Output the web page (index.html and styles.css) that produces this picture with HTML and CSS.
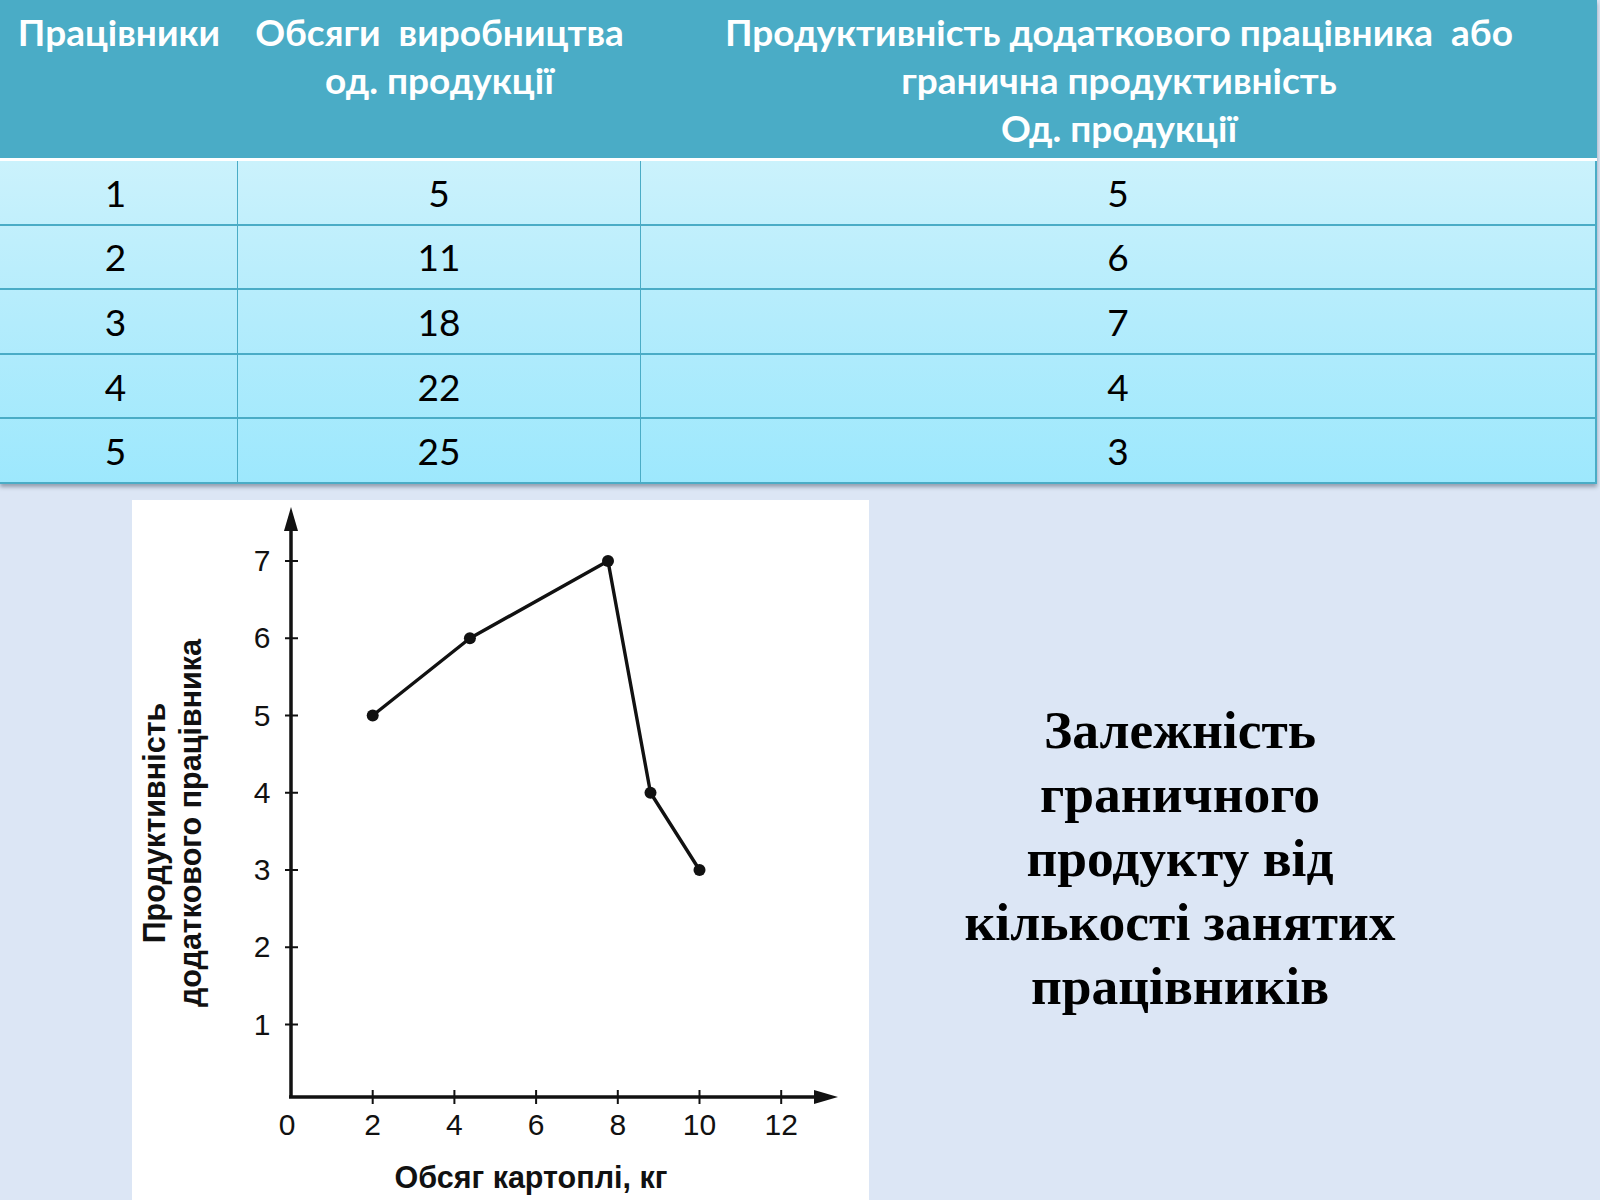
FILE: index.html
```html
<!DOCTYPE html>
<html lang="uk">
<head>
<meta charset="utf-8">
<title>Гранична продуктивність</title>
<link rel="stylesheet" href="styles.css">
</head>
<body>
<div class="slide">
  <div class="table">
    <div class="thead">
      <div class="th c1">Працівники</div>
      <div class="th c2">Обсяги&nbsp; виробництва<br>од. продукції</div>
      <div class="th c3">Продуктивність додаткового працівника&nbsp; або<br>гранична продуктивність<br>Од. продукції</div>
    </div>
    <div class="tbody">
      <div class="tr"><div class="td c1">1</div><div class="td c2">5</div><div class="td c3">5</div></div>
      <div class="tr"><div class="td c1">2</div><div class="td c2">11</div><div class="td c3">6</div></div>
      <div class="tr"><div class="td c1">3</div><div class="td c2">18</div><div class="td c3">7</div></div>
      <div class="tr"><div class="td c1">4</div><div class="td c2">22</div><div class="td c3">4</div></div>
      <div class="tr"><div class="td c1">5</div><div class="td c2">25</div><div class="td c3">3</div></div>
    </div>
  </div>

  <div class="lower">
    <div class="chart">
      <svg width="737" height="700" viewBox="0 0 737 700" xmlns="http://www.w3.org/2000/svg">
        <g stroke="#111" stroke-width="3.5" fill="none">
          <line x1="159" y1="22" x2="159" y2="598"/>
          <line x1="157" y1="597" x2="690" y2="597"/>
        </g>
        <polygon points="159,7 152,31 166,31" fill="#111"/>
        <polygon points="706,597 682,590 682,604" fill="#111"/>
        <g stroke="#111" stroke-width="2">
          <line x1="153" y1="61" x2="166" y2="61"/>
          <line x1="153" y1="138.25" x2="166" y2="138.25"/>
          <line x1="153" y1="215.5" x2="166" y2="215.5"/>
          <line x1="153" y1="292.75" x2="166" y2="292.75"/>
          <line x1="153" y1="370" x2="166" y2="370"/>
          <line x1="153" y1="447.25" x2="166" y2="447.25"/>
          <line x1="153" y1="524.5" x2="166" y2="524.5"/>
          <line x1="240.7" y1="590" x2="240.7" y2="604"/>
          <line x1="322.4" y1="590" x2="322.4" y2="604"/>
          <line x1="404.1" y1="590" x2="404.1" y2="604"/>
          <line x1="485.8" y1="590" x2="485.8" y2="604"/>
          <line x1="567.5" y1="590" x2="567.5" y2="604"/>
          <line x1="649.2" y1="590" x2="649.2" y2="604"/>
        </g>
        <g class="tick" text-anchor="middle">
          <text x="130" y="71">7</text>
          <text x="130" y="148">6</text>
          <text x="130" y="226">5</text>
          <text x="130" y="303">4</text>
          <text x="130" y="380">3</text>
          <text x="130" y="457">2</text>
          <text x="130" y="535">1</text>
          <text x="155" y="635">0</text>
          <text x="240.7" y="635">2</text>
          <text x="322.4" y="635">4</text>
          <text x="404.1" y="635">6</text>
          <text x="485.8" y="635">8</text>
          <text x="567.5" y="635">10</text>
          <text x="649.2" y="635">12</text>
        </g>
        <polyline points="240.7,215.5 337.9,138.25 476,61 518.5,292.75 567.5,370" fill="none" stroke="#111" stroke-width="3.4" stroke-linejoin="round"/>
        <g fill="#111">
          <circle cx="240.7" cy="215.5" r="6"/>
          <circle cx="337.9" cy="138.25" r="6"/>
          <circle cx="476" cy="61" r="6"/>
          <circle cx="518.5" cy="292.75" r="6"/>
          <circle cx="567.5" cy="370" r="6"/>
        </g>
        <text class="axis-title" x="399" y="688" text-anchor="middle">Обсяг картоплі, кг</text>
        <text class="axis-title" transform="translate(22 323) rotate(-90)" text-anchor="middle" dominant-baseline="central">Продуктивність</text>
        <text class="axis-title" transform="translate(58 323) rotate(-90)" text-anchor="middle" dominant-baseline="central">додаткового працівника</text>
      </svg>
    </div>
    <div class="caption">Залежність<br>граничного<br>продукту від<br>кількості занятих<br>працівників</div>
  </div>
</div>
</body>
</html>
```
FILE: styles.css
```css
html, body {
  margin: 0;
  padding: 0;
}
body {
  background: #dce6f5;
  width: 1600px;
  height: 1200px;
  overflow: hidden;
}
.slide {
  display: flex;
  flex-direction: column;
}
.table {
  width: 1597px;
  box-shadow: 0 3px 4px rgba(60, 70, 90, 0.45);
  font-family: Lato, "Liberation Sans", sans-serif;
}
.thead {
  display: grid;
  grid-template-columns: 238px 403px 1fr;
  height: 158px;
  background: #4aacc6;
  border-bottom: 3px solid #ffffff;
}
.th {
  color: #ffffff;
  font-weight: 700;
  font-size: 37px;
  line-height: 48px;
  text-align: center;
  padding-top: 8px;
  white-space: nowrap;
}
.tbody {
  background: linear-gradient(to bottom, #cbf2fc 0%, #b3ecfc 50%, #9de8fd 100%);
  border-right: 2px solid #4aacc6;
}
.tr {
  display: grid;
  grid-template-columns: 238px 403px 1fr;
  height: 62.6px;
  border-bottom: 2px solid #4aacc6;
}
.td {
  font-size: 37px;
  color: #000;
  display: flex;
  align-items: center;
  justify-content: center;
}
.td.c1 {
  padding-right: 6px;
  border-right: 1px solid #4aacc6;
}
.td.c2 {
  border-right: 1px solid #4aacc6;
}
.lower {
  display: flex;
  padding-top: 16px;
}
.chart {
  margin-left: 132px;
  width: 737px;
  height: 700px;
  background: #ffffff;
}
.chart svg {
  display: block;
}
.tick {
  font-family: "Liberation Sans", Arial, sans-serif;
  font-size: 30px;
  fill: #111;
}
.axis-title {
  font-family: "Liberation Sans", Arial, sans-serif;
  font-weight: 700;
  font-size: 30.5px;
  fill: #111;
}
.caption {
  width: 622px;
  margin-top: 198px;
  text-align: center;
  font-family: "Liberation Serif", "Times New Roman", serif;
  font-weight: 700;
  font-size: 53.5px;
  line-height: 64px;
  color: #000;
}
```
